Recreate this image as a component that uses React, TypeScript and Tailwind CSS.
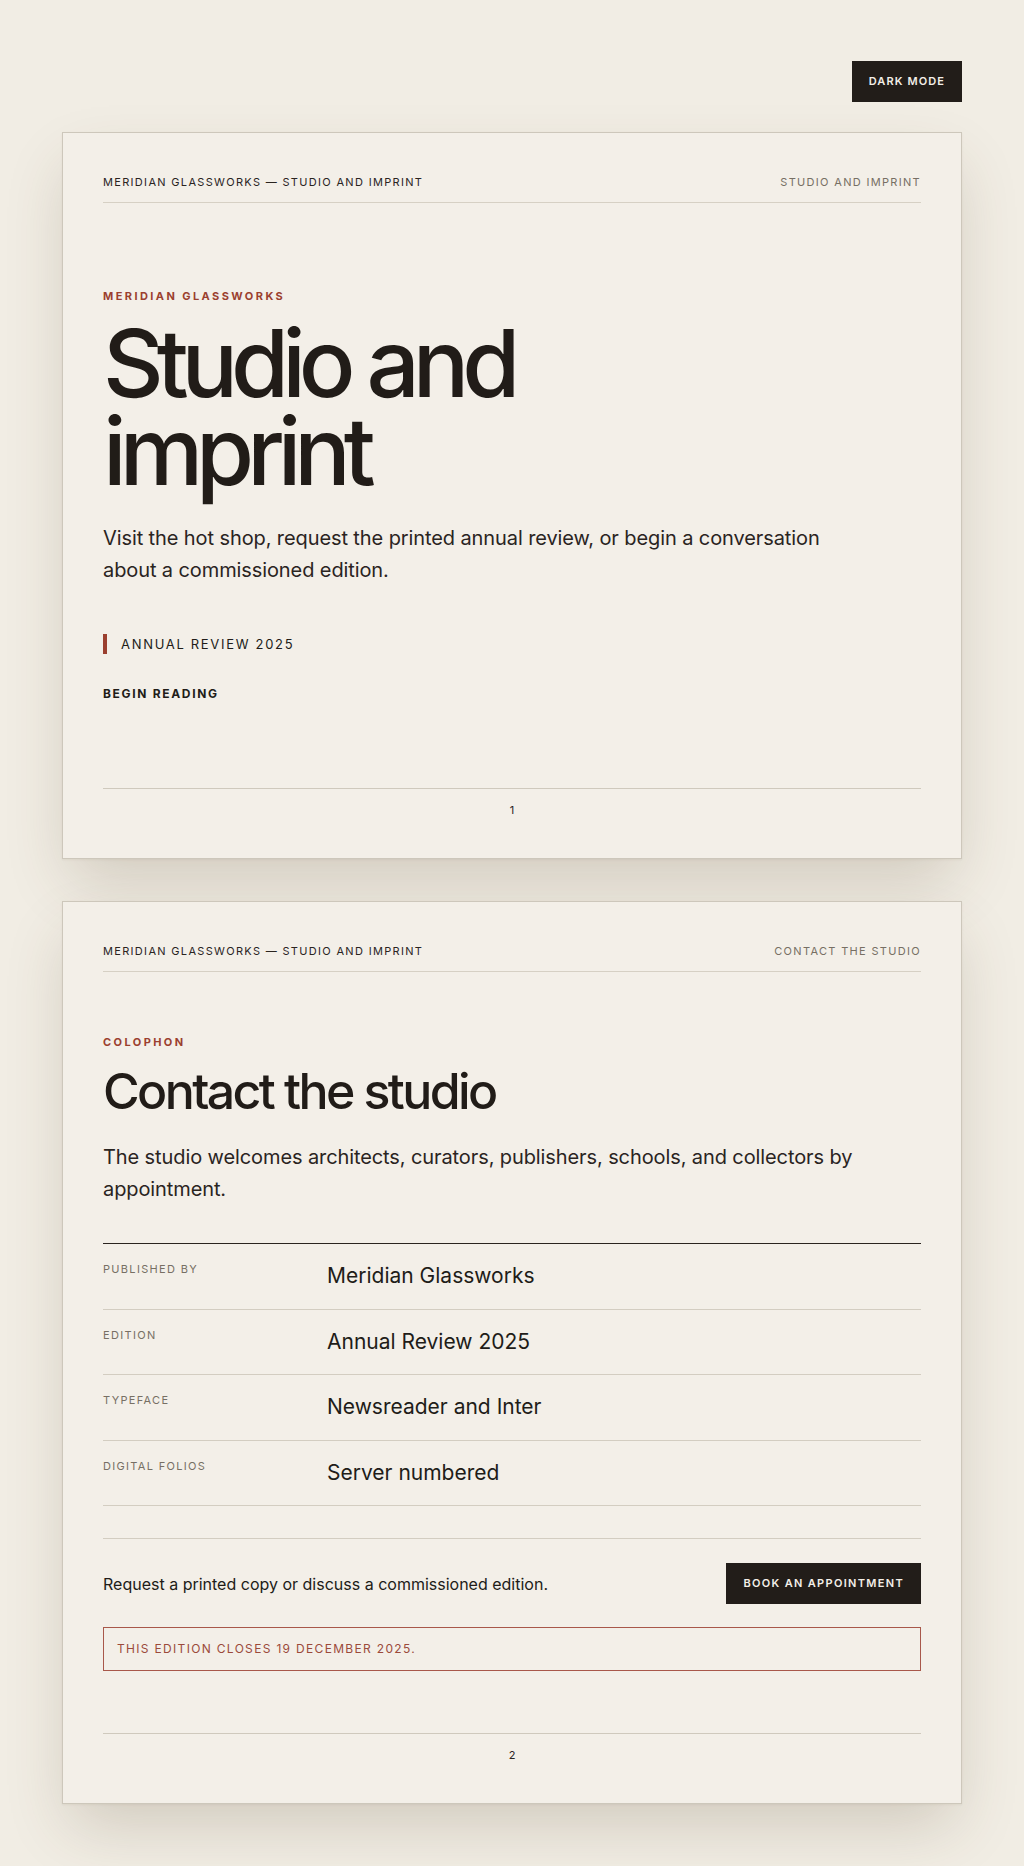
const INK = 'text-[#211c18]'

const ROWS = [
  { label: 'Published by', value: 'Meridian Glassworks' },
  { label: 'Edition', value: 'Annual Review 2025' },
  { label: 'Typeface', value: 'Newsreader and Inter' },
  { label: 'Digital folios', value: 'Server numbered' },
]

function RunningHead({ section }: { section: string }) {
  return (
    <div className="flex items-center justify-between border-b border-[#d6d0c4] pb-[11px] text-[11px] leading-[18px] tracking-[0.12em] uppercase">
      <span className="text-[#2a241f]">Meridian Glassworks — Studio and Imprint</span>
      <span className="text-[#776f64]">{section}</span>
    </div>
  )
}

function Folio({ n, className }: { n: number; className: string }) {
  return (
    <div className={`border-t border-[#cfc9bd] pt-[13px] text-center text-[11px] leading-4 text-[#2a241f] ${className}`}>
      {n}
    </div>
  )
}

function Page({ children }: { children: React.ReactNode }) {
  return (
    <section className="border border-[#cdc7bb] bg-[#f3efe8] px-10 py-10 shadow-[0_1px_2px_rgba(60,45,25,0.06),0_28px_60px_-8px_rgba(80,62,35,0.2)]">
      {children}
    </section>
  )
}

export default function App() {
  return (
    <div className={`min-h-screen bg-[#f1ede4] px-[62px] pt-[61px] pb-[62px] font-['Inter','Liberation_Sans',sans-serif] ${INK}`}>
      <div className="mx-auto max-w-[900px]">
        <div className="mb-[30px] flex justify-end">
          <button className="h-[41px] bg-[#221d19] px-[17px] text-[11px] font-semibold tracking-[0.1em] text-[#f3efe8] uppercase">
            Dark mode
          </button>
        </div>

        <div className="flex flex-col gap-[42px]">
          <Page>
            <RunningHead section="Studio and imprint" />
            <div className="pt-[85px]">
              <p className="text-[11px] leading-4 font-bold tracking-[0.22em] text-[#9b3f2f] uppercase">
                Meridian Glassworks
              </p>
              <h1 className="mt-[15px] text-[94px] leading-[88px] font-medium tracking-[-0.075em]">
                Studio and
                <br />
                imprint
              </h1>
              <p className="mt-[27px] max-w-[760px] text-[20px] leading-8 tracking-[-0.005em] text-[#2a241f]">
                Visit the hot shop, request the printed annual review, or begin a conversation about a commissioned edition.
              </p>
              <div className="mt-12 border-l-4 border-[#9b3f2f] pl-[14px] text-[13px] leading-5 tracking-[0.13em] uppercase">
                Annual Review 2025
              </div>
              <a href="#" className="mt-8 block text-[12px] leading-4 font-bold tracking-[0.14em] uppercase">
                Begin reading
              </a>
            </div>
            <Folio n={1} className="mt-[86px]" />
          </Page>

          <Page>
            <RunningHead section="Contact the studio" />
            <div className="pt-[62px]">
              <p className="text-[11px] leading-4 font-bold tracking-[0.22em] text-[#9b3f2f] uppercase">Colophon</p>
              <h2 className="mt-[14px] text-[50px] leading-[55px] font-medium tracking-[-0.052em]">Contact the studio</h2>
              <p className="mt-[22px] max-w-[760px] text-[20px] leading-8 tracking-[-0.005em] text-[#2a241f]">
                The studio welcomes architects, curators, publishers, schools, and collectors by appointment.
              </p>

              <dl className="mt-[38px] border-t border-[#2a241f]">
                {ROWS.map(r => (
                  <div key={r.label} className="grid grid-cols-[224px_1fr] items-start border-b border-[#d3cdc1] py-[18px]">
                    <dt className="text-[11px] leading-[14px] tracking-[0.12em] text-[#776f64] uppercase">{r.label}</dt>
                    <dd className="text-[21px] leading-[28.5px]">{r.value}</dd>
                  </div>
                ))}
              </dl>

              <div className="mt-8 border-t border-[#d3cdc1] pt-6">
                <div className="flex items-center justify-between">
                  <p className="text-[16px] leading-6">Request a printed copy or discuss a commissioned edition.</p>
                  <button className="h-[41px] bg-[#221d19] px-[17px] text-[11px] font-semibold tracking-[0.12em] text-[#f3efe8] uppercase">
                    Book an appointment
                  </button>
                </div>
                <div className="mt-[23px] border border-[#a8584a] px-[13px] py-[12px] text-[12px] leading-[18px] tracking-[0.11em] text-[#9b4a3b] uppercase">
                  This edition closes 19 December 2025.
                </div>
              </div>
            </div>
            <Folio n={2} className="mt-[62px]" />
          </Page>
        </div>
      </div>
    </div>
  )
}
